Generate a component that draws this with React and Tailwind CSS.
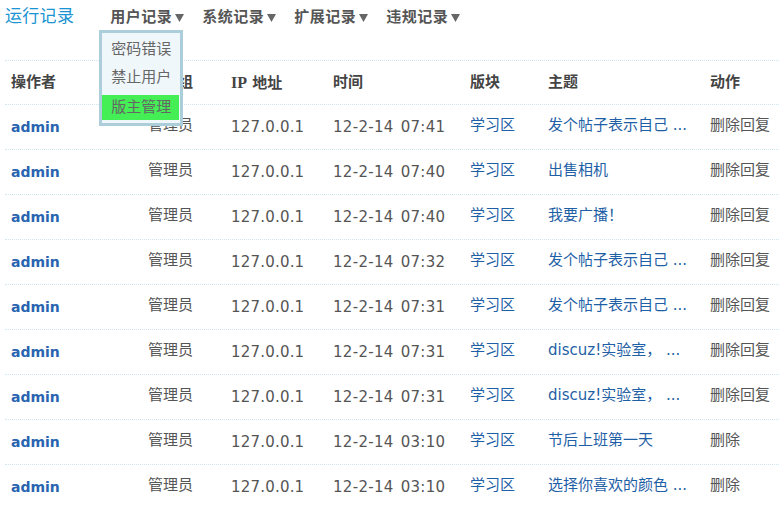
import React from "react";

const rows = [
  ["07:41", "发个帖子表示自己 ...", "删除回复"],
  ["07:40", "出售相机", "删除回复"],
  ["07:40", "我要广播！", "删除回复"],
  ["07:32", "发个帖子表示自己 ...", "删除回复"],
  ["07:31", "发个帖子表示自己 ...", "删除回复"],
  ["07:31", "discuz!实验室， ...", "删除回复"],
  ["07:31", "discuz!实验室， ...", "删除回复"],
  ["03:10", "节后上班第一天", "删除"],
  ["03:10", "选择你喜欢的颜色 ...", "删除"],
];

const font = { fontFamily: '"DejaVu Sans", "Noto Sans CJK SC", sans-serif' };

function Tri() {
  return (
    <svg width="9" height="8" viewBox="0 0 9 8" className="ml-[3px] mt-[1px]">
      <path d="M0 0 H9 L4.5 8 Z" fill="#666" />
    </svg>
  );
}

function NavItem({ label, children }) {
  return (
    <div className="relative flex items-center h-full mr-[18px]">
      <span className="font-bold text-[15px] text-[#555] tracking-[0.5px]">{label}</span>
      <Tri />
      {children}
    </div>
  );
}

export default function App() {
  return (
    <div className="w-[783px] h-[505px] overflow-hidden bg-white relative" style={font}>
      <div className="flex items-center h-[34px] pl-[5px]">
        <span className="text-[#1a94d2] text-[17px] tracking-[0.3px] mr-[36px]">运行记录</span>
        <NavItem label="用户记录">
          <div className="absolute left-[-11px] top-[30px] w-[84px] h-[96px] border-[3px] border-[#acceda] bg-[#f0f7fb] z-10 text-[15px] text-[#666]">
            <div className="h-[30px] pl-[9px] pt-[2px] flex items-center">密码错误</div>
            <div className="h-[32px] pl-[9px] pb-[4px] flex items-center">禁止用户</div>
            <div className="h-[25px] pl-[9px] mr-[1px] flex items-center bg-[#44ee55]">版主管理</div>
          </div>
        </NavItem>
        <NavItem label="系统记录" />
        <NavItem label="扩展记录" />
        <NavItem label="违规记录" />
      </div>
      <div className="mt-[26px] mx-[5px] w-[774px] border-t border-dotted border-[#cfe5f2]">
        <div className="flex h-[44px] items-center border-b border-dotted border-[#cfe5f2] font-bold text-[15px] text-[#444]">
          <div className="w-[137px] pl-[6px]">操作者</div>
          <div className="w-[83px] pl-[6px]">用户组</div>
          <div className="w-[102px] pl-[6px]">
            <span style={{ fontFamily: '"Liberation Serif", serif' }} className="text-[16px]">IP</span> 地址
          </div>
          <div className="w-[137px] pl-[6px]">时间</div>
          <div className="w-[78px] pl-[6px]">版块</div>
          <div className="w-[162px] pl-[6px]">主题</div>
          <div className="w-[75px] pl-[6px]">动作</div>
        </div>
        {rows.map((r, i) => (
          <div key={i} className="flex h-[45px] items-center border-b border-dotted border-[#cfe5f2] text-[15px] text-[#555]">
            <div className="w-[137px] pl-[6px] font-bold text-[14px] text-[#2964b0]">admin</div>
            <div className="w-[83px] pl-[6px] mt-[-3px]">管理员</div>
            <div className="w-[102px] pl-[6px] tracking-[0.2px]">127.0.0.1</div>
            <div className="w-[137px] pl-[6px] whitespace-nowrap tracking-[0.3px]">
              <span className="mr-[7px]">12-2-14</span>
              <span>{r[0]}</span>
            </div>
            <div className="w-[78px] pl-[6px] mt-[-3px] text-[#1f5fa6]">学习区</div>
            <div className="w-[162px] pl-[6px] mt-[-3px] text-[#1f5fa6] whitespace-nowrap">{r[1]}</div>
            <div className="w-[75px] pl-[6px] mt-[-3px]">{r[2]}</div>
          </div>
        ))}
      </div>
    </div>
  );
}
